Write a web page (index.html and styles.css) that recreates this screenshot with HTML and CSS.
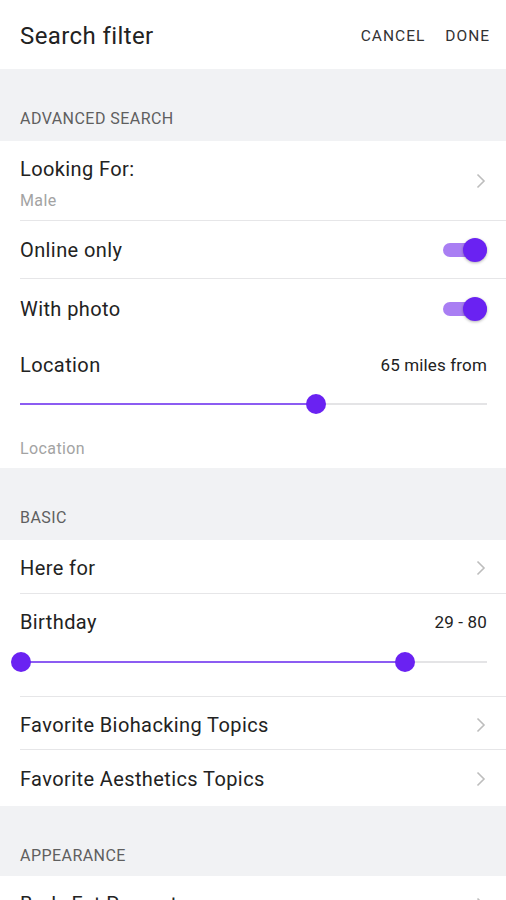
FILE: index.html
```html
<!DOCTYPE html>
<html>
<head>
<meta charset="utf-8">
<link rel="stylesheet" href="styles.css">
</head>
<body>
<div class="screen">
  <header class="topbar">
    <h1 class="title">Search filter</h1>
    <div class="actions">
      <span class="action">CANCEL</span>
      <span class="action">DONE</span>
    </div>
  </header>

  <div class="band band-first"><span>ADVANCED SEARCH</span></div>
  <section class="group">
    <div class="row row-two divided">
      <div class="texts">
        <div class="label">Looking For:</div>
        <div class="sub">Male</div>
      </div>
      <svg class="chev" viewBox="0 0 10 16" width="10" height="16"><polyline points="1.5,1.5 8,8 1.5,14.5" fill="none" stroke="#bdbdbd" stroke-width="1.6"/></svg>
    </div>
    <div class="row row-toggle divided">
      <div class="label">Online only</div>
      <div class="toggle"><span class="knob"></span></div>
    </div>
    <div class="row row-toggle">
      <div class="label">With photo</div>
      <div class="toggle"><span class="knob"></span></div>
    </div>
    <div class="block block-location">
      <div class="block-head">
        <div class="label">Location</div>
        <div class="value">65 miles from</div>
      </div>
      <div class="slider">
        <div class="track-active" style="left:0;width:63.4%"></div>
        <span class="thumb" style="left:63.4%"></span>
      </div>
      <div class="sub placeholder">Location</div>
    </div>
  </section>

  <div class="band band-basic"><span>BASIC</span></div>
  <section class="group">
    <div class="row row-here divided">
      <div class="label">Here for</div>
      <svg class="chev" viewBox="0 0 10 16" width="10" height="16"><polyline points="1.5,1.5 8,8 1.5,14.5" fill="none" stroke="#bdbdbd" stroke-width="1.6"/></svg>
    </div>
    <div class="block block-birthday divided">
      <div class="block-head">
        <div class="label">Birthday</div>
        <div class="value">29 - 80</div>
      </div>
      <div class="slider slider-range">
        <div class="track-active" style="left:0.2%;width:82.2%"></div>
        <span class="thumb" style="left:0.2%"></span>
        <span class="thumb" style="left:82.4%"></span>
      </div>
    </div>
    <div class="row row-fav1 divided">
      <div class="label">Favorite Biohacking Topics</div>
      <svg class="chev" viewBox="0 0 10 16" width="10" height="16"><polyline points="1.5,1.5 8,8 1.5,14.5" fill="none" stroke="#bdbdbd" stroke-width="1.6"/></svg>
    </div>
    <div class="row row-fav2">
      <div class="label">Favorite Aesthetics Topics</div>
      <svg class="chev" viewBox="0 0 10 16" width="10" height="16"><polyline points="1.5,1.5 8,8 1.5,14.5" fill="none" stroke="#bdbdbd" stroke-width="1.6"/></svg>
    </div>
  </section>

  <div class="band band-appearance"><span>APPEARANCE</span></div>
  <section class="group">
    <div class="row row-last">
      <div class="label">Body Fat Percentage</div>
      <svg class="chev" viewBox="0 0 10 16" width="10" height="16"><polyline points="1.5,1.5 8,8 1.5,14.5" fill="none" stroke="#bdbdbd" stroke-width="1.6"/></svg>
    </div>
  </section>
</div>
</body>
</html>
```

FILE: styles.css
```css
* { box-sizing: border-box; }
html, body {
  margin: 0;
  padding: 0;
  background: #ffffff;
}
body {
  font-family: Roboto, "Noto Sans", "Liberation Sans", sans-serif;
  color: #222222;
  width: 506px;
  height: 900px;
  overflow: hidden;
}
.screen {
  display: flex;
  flex-direction: column;
}
.topbar {
  height: 69px;
  display: flex;
  align-items: center;
  justify-content: space-between;
  padding: 2px 16px 0 20px;
  background: #ffffff;
}
.title {
  margin: 0;
  font-size: 24px;
  font-weight: 400;
  color: #222;
  letter-spacing: 0.4px;
}
.actions {
  display: flex;
  gap: 20px;
}
.action {
  font-size: 15.5px;
  font-weight: 400;
  letter-spacing: 1px;
  color: #333;
}
.band {
  background: #f1f2f4;
  display: flex;
  align-items: flex-end;
  padding-left: 20px;
}
.band span {
  font-size: 16px;
  line-height: 20px;
  color: #5f5f5f;
  letter-spacing: 0.45px;
}
.band-first { height: 72px; padding-bottom: 12px; }
.band-basic { height: 72px; padding-bottom: 12px; }
.band-appearance { height: 70px; padding-bottom: 10px; }

.group {
  background: #ffffff;
  display: flex;
  flex-direction: column;
}
.row {
  margin-left: 20px;
  padding-right: 19px;
  display: flex;
  align-items: center;
  justify-content: space-between;
}
.divided { border-bottom: 1.5px solid #e6e6e8; }
.label {
  font-size: 20px;
  line-height: 24px;
  letter-spacing: 0.4px;
  color: #222;
}
.sub {
  font-size: 16px;
  line-height: 20px;
  letter-spacing: 0.4px;
  color: #a3a3a3;
}
.row-two { height: 80px; padding-top: 7.5px; }
.row-two .texts { display: flex; flex-direction: column; gap: 10px; }
.row-two .chev { margin-top: -6px; }
.row-toggle { height: 58px; padding-top: 1px; }
.row-here { height: 54px; padding-top: 2px; }
.row-fav1 { height: 53px; padding-top: 3px; }
.row-fav2 { height: 56px; padding-top: 2px; }
.row-last {
  height: 50px;
  align-items: flex-start;
  padding-top: 16px;
}
.chev { display: block; margin-right: 1px; }
.row-last .chev { margin-top: 5px; }

.toggle {
  position: relative;
  width: 44px;
  height: 14px;
  border-radius: 7px;
  background: #a97ef3;
}
.knob {
  position: absolute;
  right: 0;
  top: -5px;
  width: 24px;
  height: 24px;
  border-radius: 50%;
  background: #6a22f2;
  box-shadow: 0 1px 3px rgba(0,0,0,0.3);
}

.block {
  margin-left: 20px;
  padding-right: 19px;
  display: flex;
  flex-direction: column;
}
.block-head {
  display: flex;
  justify-content: space-between;
  align-items: center;
}
.block-head .value {
  font-size: 17px;
  letter-spacing: 0.15px;
  color: #222;
}
.block-location { height: 131px; padding-top: 16px; }
.block-location .slider { margin-top: 26px; }
.block-location .placeholder { margin-top: 34px; }
.block-birthday { height: 103px; padding-top: 16px; }
.block-birthday .slider { margin-top: 27px; }

.slider {
  position: relative;
  height: 2px;
  background: #e4e4e6;
}
.track-active {
  position: absolute;
  top: 0;
  height: 2px;
  background: #8c5cf2;
}
.thumb {
  position: absolute;
  top: -9px;
  width: 20px;
  height: 20px;
  margin-left: -10px;
  border-radius: 50%;
  background: #6a22f2;
}
```
